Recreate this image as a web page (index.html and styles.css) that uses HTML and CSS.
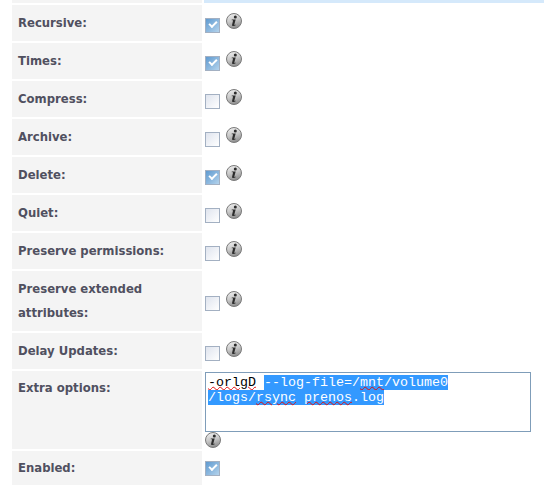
FILE: index.html
```html
<!DOCTYPE html>
<html lang="en">
<head>
    <meta charset="UTF-8">
    <meta name="viewport" content="width=device-width, initial-scale=1.0">
    <title>Rsync options</title>
    <link rel="stylesheet" href="styles.css">
</head>
<body>
    <svg class="defs" width="0" height="0" aria-hidden="true">
        <defs>
            <linearGradient id="infoFill" x1="0.3" y1="0" x2="0.6" y2="1">
                <stop offset="0" stop-color="#eeeeee"/>
                <stop offset="0.5" stop-color="#c6c6c6"/>
                <stop offset="1" stop-color="#8a8a8a"/>
            </linearGradient>
            <symbol id="info" viewBox="0 0 16 16">
                <circle cx="8" cy="8" r="7.5" fill="url(#infoFill)" stroke="#7a7a7a"/>
                <circle cx="9.300" cy="3.900" r="1.500" fill="#2c2c2c"/>
                <path d="M5.800 6.500h3.900L8.300 11.500c-.1.500.3.600 1.300.1l-.2 1c-1.400.7-3.700.9-3.300-.9l1-4.500H5.700z" fill="#2c2c2c"/>
            </symbol>
        </defs>
    </svg>

    <div class="form">
        <div class="label strip"></div>
        <div class="strip blue"></div>

        <div class="label">Recursive:</div>
        <div class="field"><span class="check on"></span><svg class="info"><use href="#info"/></svg></div>

        <div class="label">Times:</div>
        <div class="field"><span class="check on"></span><svg class="info"><use href="#info"/></svg></div>

        <div class="label">Compress:</div>
        <div class="field"><span class="check"></span><svg class="info"><use href="#info"/></svg></div>

        <div class="label">Archive:</div>
        <div class="field"><span class="check"></span><svg class="info"><use href="#info"/></svg></div>

        <div class="label">Delete:</div>
        <div class="field"><span class="check on"></span><svg class="info"><use href="#info"/></svg></div>

        <div class="label">Quiet:</div>
        <div class="field"><span class="check"></span><svg class="info"><use href="#info"/></svg></div>

        <div class="label">Preserve permissions:</div>
        <div class="field"><span class="check"></span><svg class="info"><use href="#info"/></svg></div>

        <div class="label">Preserve extended attributes:</div>
        <div class="field"><span class="check"></span><svg class="info"><use href="#info"/></svg></div>

        <div class="label">Delay Updates:</div>
        <div class="field"><span class="check"></span><svg class="info"><use href="#info"/></svg></div>

        <div class="label extra">Extra options:</div>
        <div class="extra-field">
            <div class="textbox"><span class="typo">-orlgD</span> <span class="sel">--log-file=/<span class="typo">mnt</span>/volume0</span><br><span class="sel">/logs/<span class="typo">rsync</span> <span class="typo">prenos</span>.log</span></div>
            <svg class="info below"><use href="#info"/></svg>
        </div>

        <div class="label">Enabled:</div>
        <div class="field"><span class="check on plain"></span></div>
    </div>
</body>
</html>
```

FILE: styles.css
```css
html, body {
    margin: 0;
    height: 485px;
    overflow: hidden;
    background: #ffffff;
}
.defs {
    display: block;
    height: 0;
}
.form {
    display: grid;
    grid-template-columns: 190px 340px;
    grid-template-rows: 3px repeat(7, 36px) 60px 36px 78px 34px;
    gap: 2px;
    margin-left: 12px;
    font-family: "DejaVu Sans", Verdana, sans-serif;
}
.label {
    display: flex;
    align-items: center;
    box-sizing: border-box;
    padding: 0 6px;
    background: #f4f4f4;
    color: #505060;
    font-size: 11.67px;
    font-weight: bold;
    line-height: 24px;
}
.strip.blue {
    background: #d5e9fb;
    margin-right: -2px;
}
.field {
    display: flex;
    align-items: center;
    padding-left: 1px;
}
.check {
    box-sizing: border-box;
    width: 15px;
    height: 15px;
    margin-top: 5px;
    border: 1px solid #a3b0c2;
    background: linear-gradient(135deg, #dfe4ee, #ffffff);
    position: relative;
}
.check.on {
    background: linear-gradient(135deg, #5f9ad0, #b4d3ec);
}
.check.on::after {
    content: "";
    position: absolute;
    left: 3px;
    top: 2px;
    width: 6px;
    height: 3px;
    border-left: 2px solid #ffffff;
    border-bottom: 2px solid #ffffff;
    transform: rotate(-45deg);
}
.check.plain {
    margin-top: 0;
}
.info {
    display: block;
    width: 16px;
    height: 16px;
    margin: -5px 0 0 6px;
}
.info.below {
    margin: 0;
}
.extra {
    align-items: flex-start;
    padding-top: 5px;
}
.extra-field {
    padding: 1px 0 0 1px;
}
.textbox {
    box-sizing: border-box;
    width: 326px;
    height: 60px;
    padding: 2px;
    border: 1px solid #7f9db9;
    background: #ffffff;
    color: #000000;
    font-family: "Liberation Mono", "Courier New", monospace;
    font-size: 13.33px;
    line-height: 15px;
    white-space: pre;
}
.sel {
    background: #3399ff;
    color: #ffffff;
}
.typo {
    text-decoration: underline wavy #e01010 1px;
    text-underline-offset: 0;
}
```
